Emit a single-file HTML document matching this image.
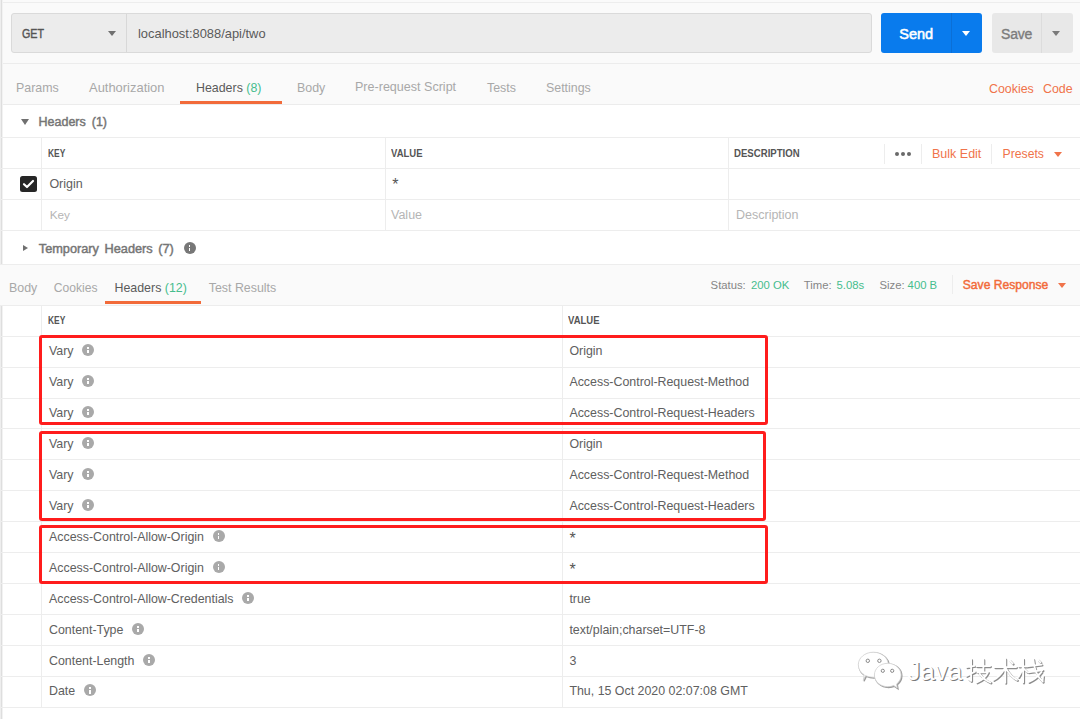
<!DOCTYPE html>
<html><head><meta charset="utf-8">
<style>
*{margin:0;padding:0;box-sizing:border-box}
html,body{width:1080px;height:719px;overflow:hidden;background:#fff;font-family:"Liberation Sans",sans-serif;color:#505050}
.a{position:absolute}
.t{position:absolute;white-space:nowrap;line-height:normal}
.hl{position:absolute;left:0;width:1080px;height:1px;background:#ededed}
.vl{position:absolute;width:1px;background:#ededed}
.tri-d{position:absolute;width:0;height:0;border-left:4px solid transparent;border-right:4px solid transparent;border-top:5px solid #707070}
.info{position:absolute;width:12px;height:12px;border-radius:50%;background:#a9a9a9}
.info:before{content:"";position:absolute;left:5.1px;top:3px;width:1.8px;height:2px;background:#fff}
.info:after{content:"";position:absolute;left:5.1px;top:6px;width:1.8px;height:3.2px;background:#fff}
.rb{position:absolute;border:3px solid #ff1c1c;border-radius:3px}
</style></head><body>
<!-- top bar -->
<div class="a" style="left:0;top:0;width:1080px;height:104px;background:#fafafa"></div>
<div class="a" style="left:0;top:2px;width:1080px;height:1px;background:#ededed"></div>
<div class="a" style="left:0;top:63px;width:1080px;height:1px;background:#ececec"></div>
<div class="a" style="left:0;top:104px;width:1080px;height:1px;background:#ececec"></div>
<div class="a" style="left:1px;top:0;width:1px;height:719px;background:#dedede"></div>
<div class="a" style="left:0;top:0;width:1px;height:719px;background:#eeeeee"></div>
<div class="a" style="left:2px;top:0;width:1px;height:719px;background:#f2f2f2"></div>

<!-- method + url -->
<div class="a" style="left:11px;top:13px;width:861px;height:40px;background:#ececec;border:1px solid #dadada;border-radius:3px"></div>
<div class="a" style="left:126px;top:14px;width:1px;height:38px;background:#d8d8d8"></div>
<div class="t" style="left:22px;top:27px;font-size:12.6px;color:#555;-webkit-text-stroke:0.45px #555;transform:scaleX(0.85);transform-origin:0 0">GET</div>
<div class="tri-d" style="left:108px;top:31px"></div>
<div class="t" style="left:138px;top:26px;font-size:12.9px;color:#5a5a5a">localhost:8088/api/two</div>

<!-- send -->
<div class="a" style="left:881px;top:13px;width:101px;height:40px;background:#097bed;border-radius:3px"></div>
<div class="a" style="left:951px;top:13px;width:1px;height:40px;background:#0b6fd6"></div>
<div class="t" style="left:899.3px;top:25.7px;font-size:14.5px;color:#fff;-webkit-text-stroke:0.55px #fff">Send</div>
<div class="tri-d" style="left:962px;top:31px;border-top-color:#fff"></div>
<!-- save -->
<div class="a" style="left:992px;top:13px;width:81px;height:40px;background:#e8e8e8;border-radius:3px"></div>
<div class="a" style="left:1041px;top:13px;width:1px;height:40px;background:#dcdcdc"></div>
<div class="t" style="left:1001px;top:26.4px;font-size:14px;color:#7c7c7c;-webkit-text-stroke:0.35px #7c7c7c;letter-spacing:-0.2px">Save</div>
<div class="tri-d" style="left:1052px;top:31px;border-top-color:#7a7a7a"></div>

<!-- req tabs -->
<div class="t" style="left:16px;top:80.5px;font-size:12.4px;color:#a8a8a8">Params</div>
<div class="t" style="left:89px;top:79.8px;font-size:12.95px;color:#a8a8a8">Authorization</div>
<div class="t" style="left:196px;top:80.5px;font-size:12.4px;color:#5a5a5a">Headers <span style="color:#46bd8d">(8)</span></div>
<div class="a" style="left:180px;top:101px;width:102px;height:3px;background:#f26b3a"></div>
<div class="t" style="left:297px;top:80.5px;font-size:12.4px;color:#a8a8a8">Body</div>
<div class="t" style="left:355px;top:80.3px;font-size:12.55px;color:#a8a8a8">Pre-request Script</div>
<div class="t" style="left:487px;top:80.5px;font-size:12.4px;color:#a8a8a8">Tests</div>
<div class="t" style="left:546px;top:80.5px;font-size:12.4px;color:#a8a8a8">Settings</div>
<div class="t" style="left:989px;top:82px;font-size:12.4px;color:#f0734a">Cookies</div>
<div class="t" style="left:1043px;top:82px;font-size:12.4px;color:#f0734a">Code</div>


<!-- headers (1) -->
<div class="tri-d" style="left:21px;top:119px;border-top-width:6px;border-left-width:4px;border-right-width:4px"></div>
<div class="t" style="left:38.5px;top:114.6px;font-size:12.5px;word-spacing:2.5px;color:#757575;-webkit-text-stroke:0.45px #757575">Headers (1)</div>
<div class="hl" style="top:137px"></div>
<div class="hl" style="top:168px"></div>
<div class="hl" style="top:199px"></div>
<div class="hl" style="top:230px"></div>
<div class="vl" style="left:41px;top:137px;height:93px"></div>
<div class="vl" style="left:385px;top:137px;height:93px"></div>
<div class="vl" style="left:728px;top:137px;height:93px"></div>
<div class="t" style="left:47.5px;top:146.5px;font-size:10.8px;font-weight:bold;color:#555;transform:scaleX(0.78);transform-origin:0 0">KEY</div>
<div class="t" style="left:390.7px;top:146.5px;font-size:10.8px;font-weight:bold;color:#555;transform:scaleX(0.88);transform-origin:0 0">VALUE</div>
<div class="t" style="left:734px;top:146.5px;font-size:10.8px;font-weight:bold;color:#555;transform:scaleX(0.89);transform-origin:0 0">DESCRIPTION</div>
<div class="vl" style="left:884px;top:144px;height:20px"></div>
<div class="vl" style="left:921px;top:144px;height:20px"></div>
<div class="vl" style="left:991px;top:144px;height:20px"></div>
<div class="a" style="left:895px;top:151.5px;width:4px;height:4px;border-radius:50%;background:#6a6a6a"></div>
<div class="a" style="left:901px;top:151.5px;width:4px;height:4px;border-radius:50%;background:#6a6a6a"></div>
<div class="a" style="left:907px;top:151.5px;width:4px;height:4px;border-radius:50%;background:#6a6a6a"></div>
<div class="t" style="left:932px;top:147.2px;font-size:12.5px;color:#f0734a">Bulk Edit</div>
<div class="t" style="left:1002.6px;top:147.2px;font-size:12.2px;color:#f0734a">Presets</div>
<div class="tri-d" style="left:1054px;top:152px;border-top-color:#f0734a"></div>
<div class="a" style="left:20px;top:176px;width:17px;height:16px;border-radius:2.5px;background:#262626"></div>
<svg class="a" style="left:20px;top:176px" width="17" height="16" viewBox="0 0 17 16"><path d="M4 8.2 L7 11 L13 5" stroke="#fff" stroke-width="2.2" fill="none" stroke-linecap="round" stroke-linejoin="round"/></svg>
<div class="t" style="left:49.4px;top:176.7px;font-size:12.5px;color:#606060">Origin</div>
<div class="t" style="left:392.2px;top:176.3px;font-size:16px;color:#555">*</div>
<div class="t" style="left:49.7px;top:208.2px;font-size:11.8px;color:#b5b5b5">Key</div>
<div class="t" style="left:391px;top:207.7px;font-size:12.5px;color:#b5b5b5">Value</div>
<div class="t" style="left:736px;top:207.7px;font-size:12.5px;color:#b5b5b5">Description</div>

<!-- temporary headers -->
<div class="a" style="left:23px;top:244.5px;width:0;height:0;border-top:3.5px solid transparent;border-bottom:3.5px solid transparent;border-left:5px solid #707070"></div>
<div class="t" style="left:38.75px;top:240.7px;font-size:12.75px;word-spacing:2px;color:#757575;-webkit-text-stroke:0.45px #757575">Temporary Headers (7)</div>
<div class="info" style="left:183.6px;top:242px;background:#777"></div>
<div class="a" style="left:0;top:264px;width:1080px;height:41px;background:#fafafa"></div>
<div class="hl" style="top:264px"></div>
<div class="hl" style="top:305px"></div>

<!-- response tabs -->
<div class="t" style="left:9px;top:281px;font-size:12.4px;color:#a8a8a8">Body</div>
<div class="t" style="left:53.75px;top:281px;font-size:12.1px;color:#a8a8a8">Cookies</div>
<div class="t" style="left:114.5px;top:281px;font-size:12.4px;color:#5a5a5a">Headers <span style="color:#46bd8d">(12)</span></div>
<div class="a" style="left:105px;top:301px;width:95.5px;height:3px;background:#f26b3a"></div>
<div class="t" style="left:208.75px;top:281px;font-size:12.4px;color:#a8a8a8">Test Results</div>
<div class="t" style="left:710.6px;top:278.5px;font-size:11.3px;color:#868686">Status:</div>
<div class="t" style="left:751px;top:278.5px;font-size:11.3px;color:#46bd8d">200 OK</div>
<div class="t" style="left:803.8px;top:278.5px;font-size:11.3px;color:#868686">Time:</div>
<div class="t" style="left:836.5px;top:278.5px;font-size:11.3px;color:#46bd8d">5.08s</div>
<div class="t" style="left:879.5px;top:278.5px;font-size:11.3px;color:#868686">Size:</div>
<div class="t" style="left:907.6px;top:278.5px;font-size:11.3px;color:#46bd8d">400 B</div>
<div class="vl" style="left:952px;top:275px;height:19px"></div>
<div class="t" style="left:962.8px;top:278.3px;font-size:12.1px;color:#f26b3a;-webkit-text-stroke:0.45px #f26b3a">Save Response</div>
<div class="tri-d" style="left:1058px;top:282.5px;border-top-color:#f0734a"></div>

<!-- response table -->
<div class="t" style="left:47.5px;top:313.5px;font-size:10.8px;font-weight:bold;color:#555;transform:scaleX(0.78);transform-origin:0 0">KEY</div>
<div class="t" style="left:567.7px;top:313.5px;font-size:10.8px;font-weight:bold;color:#555;transform:scaleX(0.88);transform-origin:0 0">VALUE</div>
<div class="vl" style="left:41px;top:305px;height:402px"></div>
<div class="vl" style="left:562px;top:305px;height:402px"></div>
<div class="hl" style="top:336px"></div>
<div class="t" style="left:49px;top:344.00px;font-size:12.4px;color:#606060">Vary</div>
<div class="info" style="left:82.1px;top:344.0px"></div>
<div class="t" style="left:569.4px;top:344.00px;font-size:12.4px;color:#606060">Origin</div>
<div class="hl" style="top:367px"></div>
<div class="t" style="left:49px;top:374.95px;font-size:12.4px;color:#606060">Vary</div>
<div class="info" style="left:82.1px;top:374.9px"></div>
<div class="t" style="left:569.4px;top:374.95px;font-size:12.4px;color:#606060">Access-Control-Request-Method</div>
<div class="hl" style="top:398px"></div>
<div class="t" style="left:49px;top:405.90px;font-size:12.4px;color:#606060">Vary</div>
<div class="info" style="left:82.1px;top:405.9px"></div>
<div class="t" style="left:569.4px;top:405.90px;font-size:12.4px;color:#606060">Access-Control-Request-Headers</div>
<div class="hl" style="top:428px"></div>
<div class="t" style="left:49px;top:436.85px;font-size:12.4px;color:#606060">Vary</div>
<div class="info" style="left:82.1px;top:436.9px"></div>
<div class="t" style="left:569.4px;top:436.85px;font-size:12.4px;color:#606060">Origin</div>
<div class="hl" style="top:459px"></div>
<div class="t" style="left:49px;top:467.80px;font-size:12.4px;color:#606060">Vary</div>
<div class="info" style="left:82.1px;top:467.8px"></div>
<div class="t" style="left:569.4px;top:467.80px;font-size:12.4px;color:#606060">Access-Control-Request-Method</div>
<div class="hl" style="top:490px"></div>
<div class="t" style="left:49px;top:498.75px;font-size:12.4px;color:#606060">Vary</div>
<div class="info" style="left:82.1px;top:498.8px"></div>
<div class="t" style="left:569.4px;top:498.75px;font-size:12.4px;color:#606060">Access-Control-Request-Headers</div>
<div class="hl" style="top:521px"></div>
<div class="t" style="left:49px;top:529.70px;font-size:12.4px;color:#606060">Access-Control-Allow-Origin</div>
<div class="info" style="left:212.5px;top:529.7px"></div>
<div class="t" style="left:569.5px;top:529.5px;font-size:16px;color:#555">*</div>
<div class="hl" style="top:552px"></div>
<div class="t" style="left:49px;top:560.65px;font-size:12.4px;color:#606060">Access-Control-Allow-Origin</div>
<div class="info" style="left:212.5px;top:560.6px"></div>
<div class="t" style="left:569.5px;top:560.5px;font-size:16px;color:#555">*</div>
<div class="hl" style="top:583px"></div>
<div class="t" style="left:49px;top:591.60px;font-size:12.4px;color:#606060">Access-Control-Allow-Credentials</div>
<div class="info" style="left:242.2px;top:591.6px"></div>
<div class="t" style="left:569.4px;top:591.60px;font-size:12.4px;color:#606060">true</div>
<div class="hl" style="top:614px"></div>
<div class="t" style="left:49px;top:622.55px;font-size:12.4px;color:#606060">Content-Type</div>
<div class="info" style="left:131.9px;top:622.6px"></div>
<div class="t" style="left:569.4px;top:622.55px;font-size:12.4px;color:#606060">text/plain;charset=UTF-8</div>
<div class="hl" style="top:645px"></div>
<div class="t" style="left:49px;top:653.50px;font-size:12.4px;color:#606060">Content-Length</div>
<div class="info" style="left:143.0px;top:653.5px"></div>
<div class="t" style="left:569.4px;top:653.50px;font-size:12.4px;color:#606060">3</div>
<div class="hl" style="top:676px"></div>
<div class="t" style="left:49px;top:684.45px;font-size:12.4px;color:#606060">Date</div>
<div class="info" style="left:83.7px;top:684.4px"></div>
<div class="t" style="left:569.4px;top:684.45px;font-size:12.4px;color:#606060">Thu, 15 Oct 2020 02:07:08 GMT</div>
<div class="hl" style="top:707px"></div>
<div class="rb" style="left:39px;top:335px;width:729px;height:90px"></div>
<div class="rb" style="left:39px;top:431px;width:727px;height:89.5px"></div>
<div class="rb" style="left:38.5px;top:524.7px;width:729px;height:59.8px"></div>

<!-- watermark -->
<svg class="a" style="left:850px;top:645px" width="210" height="50" viewBox="0 0 210 50">
<defs>
<g id="bub">
<path d="M23.3 7.2 C31.6 7.2 38.3 12.8 38.3 19.7 C38.3 26.6 31.6 32.2 23.3 32.2 C20.5 32.2 17.8 31.6 15.6 30.6 L13.3 35.5 L14.2 29.8 C10.6 27.6 8.3 23.9 8.3 19.7 C8.3 12.8 15 7.2 23.3 7.2 Z"/>
</g>
<g id="bub2">
<path d="M37.7 18.3 C45.1 18.3 51.1 23.5 51.1 30 C51.1 33.6 49.4 36.9 46.6 39 L47.2 43 L43.8 40.6 C42 41.3 39.9 41.7 37.7 41.7 C30.3 41.7 24.4 36.5 24.4 30 C24.4 23.5 30.3 18.3 37.7 18.3 Z"/>
</g>
</defs>
<g transform="translate(0.8,0.8)" fill="none" stroke="#9a9a9a" stroke-width="1.3"><use href="#bub"/></g>
<g fill="#fff" stroke="#d2d2d2" stroke-width="0.8"><use href="#bub"/></g>
<g transform="translate(0.8,0.8)" fill="#9a9a9a" stroke="#9a9a9a" stroke-width="1.3"><use href="#bub2"/></g>
<g fill="#fff" stroke="#d2d2d2" stroke-width="0.8"><use href="#bub2"/></g>
<g fill="none" stroke="#8a8a8a" stroke-width="1">
<circle cx="17.8" cy="15.8" r="1.7"/><circle cx="29.4" cy="15.8" r="1.7"/>
<circle cx="32.8" cy="25.8" r="1.6"/><circle cx="42.2" cy="25.8" r="1.6"/>
</g>
<text x="57.3" y="35" font-family="Liberation Sans" font-size="26" letter-spacing="0" fill="#7a7a7a" transform="translate(1.1,1.1)">Java</text>
<text x="57.3" y="35" font-family="Liberation Sans" font-size="26" letter-spacing="0" fill="#fff">Java</text>
<g transform="translate(116.4,13.9) scale(0.255,0.255)" stroke="#8c8c8c" stroke-width="8.5"><use href="#cjkp"/></g>
<g transform="translate(115.5,13) scale(0.255,0.255)" stroke="#fff" stroke-width="7">
<g id="cjkp" fill="none" stroke-linecap="round" stroke-linejoin="round">
<path d="M5 36 L36 31 M22 6 L22 90 L13 83 M4 70 L37 54 M44 32 L96 32 M70 6 L70 52 M47 56 L88 56 Q76 82 44 96 M56 63 Q72 86 98 96"/>
<path transform="translate(106,0)" d="M8 36 L92 36 M50 4 L50 97 M48 40 Q30 72 4 86 M52 40 Q70 72 96 86 M68 10 L79 22"/>
<path transform="translate(206,0)" d="M3 33 L37 33 M20 5 L20 96 M19 36 Q12 60 2 74 M22 42 L35 54 M42 32 L92 26 M40 56 L96 48 M60 6 Q64 62 97 93 M96 92 L98 72 M92 55 Q72 82 42 94 M79 8 L88 17"/>
</g>
</g>
</svg>
</body></html>
